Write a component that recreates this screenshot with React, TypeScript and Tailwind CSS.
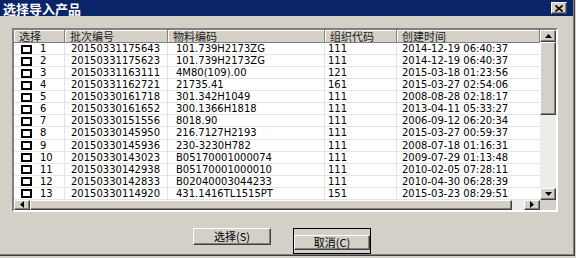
import React from 'react';

const ROWS = [
  ['1', '20150331175643', '101.739H2173ZG', '111', '2014-12-19 06:40:37'],
  ['2', '20150331175623', '101.739H2173ZG', '111', '2014-12-19 06:40:37'],
  ['3', '20150331163111', '4M80(109).00', '121', '2015-03-18 01:23:56'],
  ['4', '20150331162721', '21735.41', '161', '2015-03-27 02:54:06'],
  ['5', '20150330161718', '301.342H1049', '111', '2008-08-28 02:18:17'],
  ['6', '20150330161652', '300.1366H1818', '111', '2013-04-11 05:33:27'],
  ['7', '20150330151556', '8018.90', '111', '2006-09-12 06:20:34'],
  ['8', '20150330145950', '216.7127H2193', '111', '2015-03-27 00:59:37'],
  ['9', '20150330145936', '230-3230H782', '111', '2008-07-18 01:16:31'],
  ['10', '20150330143023', 'B05170001000074', '111', '2009-07-29 01:13:48'],
  ['11', '20150330142938', 'B05170001000010', '111', '2010-02-05 07:28:11'],
  ['12', '20150330142833', 'B02040003044233', '111', '2010-04-30 06:28:39'],
  ['13', '20150330114920', '431.1416TL1515PT', '151', '2015-03-23 08:29:51'],
];

const HEADERS = ['选择', '批次编号', '物料编码', '组织代码', '创建时间'];

const cjk = "font-['Noto_Sans_CJK_SC','Noto_Sans',sans-serif]";
const mono = "font-['DejaVu_Sans','Noto_Sans_CJK_SC',sans-serif]";
const cols = 'grid grid-cols-[51px_103px_157px_72px_1fr]';
const raised =
  'bg-[#d4d0c8] border border-t-white border-l-white border-r-[#404040] border-b-[#404040] shadow-[inset_-1px_-1px_0_#808080]';

function Arrow({ dir }: { dir: 'up' | 'down' | 'left' | 'right' }) {
  const pts = {
    up: '0,4 7,4 3.5,0',
    down: '0,0 7,0 3.5,4',
    left: '4,0 4,7 0,3.5',
    right: '0,0 0,7 4,3.5',
  }[dir];
  const vertical = dir === 'up' || dir === 'down';
  return (
    <svg width={vertical ? 7 : 4} height={vertical ? 4 : 7}>
      <polygon points={pts} fill="#000" />
    </svg>
  );
}

export default function App() {
  return (
    <div className="w-[576px] h-[258px] bg-[#d4d0c8] overflow-hidden">
      <div className="w-[575px] h-[256px] border-r border-b border-[#404040]">
        <div className="h-full border-r border-b border-[#808080] flex flex-col">
          {/* Title bar */}
          <div className="h-[16px] bg-[#0a246a] flex items-center justify-between pl-[3px] pr-[6px]">
            <span className={`${cjk} text-white font-bold text-[13px] leading-none`}>选择导入产品</span>
            <div className={`${raised} w-[16px] h-[12px] flex items-center justify-center`}>
              <svg width="8" height="7" viewBox="0 0 8 7">
                <path d="M0.5 0.5 L7.5 6.5 M7.5 0.5 L0.5 6.5" stroke="#000" strokeWidth="1.6" />
              </svg>
            </div>
          </div>

          {/* List frame */}
          <div className="mt-[12px] ml-[12px] w-[546px] h-[184px] border-2 border-t-[#808080] border-l-[#808080] border-r-white border-b-white bg-white flex flex-col">
            <div className="flex h-[170px]">
              <div className="w-[526px]">
                <div className={`${cols} h-[13px] bg-[#d4d0c8] border-b border-[#808080]`}>
                  {HEADERS.map((h) => (
                    <div
                      key={h}
                      className={`${cjk} text-[11px] leading-[12px] pl-[5px] text-[#222] border-r border-[#808080] shadow-[inset_1px_1px_0_#fff] whitespace-nowrap`}
                    >
                      {h}
                    </div>
                  ))}
                </div>
                {ROWS.map((r) => (
                  <div key={r[0]} className={`${cols} h-[12.07px] border-b border-[#e4e4e4]`}>
                    <div className="flex items-center pl-[7px] border-r border-[#e4e4e4]">
                      <span className="w-[11px] h-[9px] border-2 border-black bg-white" />
                      <span className={`${mono} text-[10px] leading-none ml-[8px] text-black`}>{r[0]}</span>
                    </div>
                    <div className={`${mono} text-[10px] leading-[12px] pl-[6px] border-r border-[#e4e4e4] whitespace-nowrap`}>{r[1]}</div>
                    <div className={`${mono} text-[10px] leading-[12px] pl-[8px] border-r border-[#e4e4e4] whitespace-nowrap`}>{r[2]}</div>
                    <div className={`${mono} text-[10px] leading-[12px] pl-[3px] border-r border-[#e4e4e4] whitespace-nowrap`}>{r[3]}</div>
                    <div className={`${mono} text-[10px] leading-[12px] pl-[5px] whitespace-nowrap`}>{r[4]}</div>
                  </div>
                ))}
              </div>
              {/* Vertical scrollbar */}
              <div className="w-[16px] flex flex-col bg-[#eeece8]">
                <div className={`${raised} h-[12px] flex items-center justify-center`}>
                  <Arrow dir="up" />
                </div>
                <div className={`${raised} h-[73px]`} />
                <div className="flex-1" />
                <div className={`${raised} h-[12px] flex items-center justify-center`}>
                  <Arrow dir="down" />
                </div>
              </div>
            </div>
            {/* Horizontal scrollbar */}
            <div className="flex h-[12px]">
              <div className="w-[526px] flex bg-[#eeece8]">
                <div className={`${raised} w-[16px] flex items-center justify-center`}>
                  <Arrow dir="left" />
                </div>
                <div className={`${raised} w-[482px]`} />
                <div className="flex-1" />
                <div className={`${raised} w-[16px] flex items-center justify-center`}>
                  <Arrow dir="right" />
                </div>
              </div>
              <div className="w-[16px] bg-[#d4d0c8]" />
            </div>
          </div>

          {/* Buttons */}
          <div className="mt-[16px] flex pl-[193px] gap-[22px]">
            <button className={`${raised} ${cjk} w-[78px] h-[17px] text-[11px] leading-none text-black`}>
              选择(S)
            </button>
            <div className="border border-black">
              <button className={`${raised} ${cjk} w-[76px] h-[15px] text-[11px] leading-none text-black`}>
                取消(C)
              </button>
            </div>
          </div>
        </div>
      </div>
    </div>
  );
}
